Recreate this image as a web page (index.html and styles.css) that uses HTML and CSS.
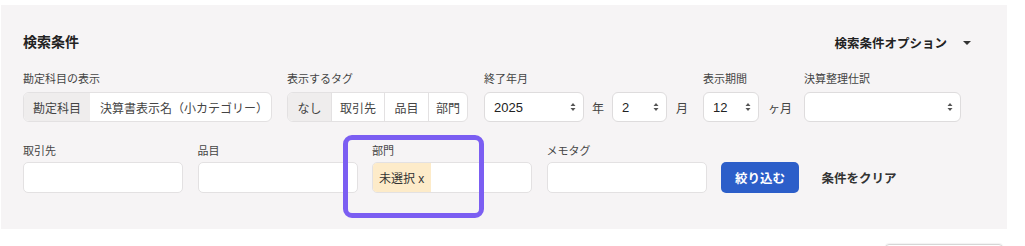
FILE: index.html
```html
<!DOCTYPE html>
<html lang="ja">
<head>
<meta charset="utf-8">
<link rel="stylesheet" href="styles.css">
</head>
<body>
<section class="panel">
  <div class="head">
    <h2 class="title">検索条件</h2>
    <div class="options">検索条件オプション<span class="caret"></span></div>
  </div>

  <div class="row row1">
    <div class="field">
      <div class="label">勘定科目の表示</div>
      <div class="seg seg-account">
        <span class="seg-item active">勘定科目</span>
        <span class="seg-item">決算書表示名（小カテゴリー）</span>
      </div>
    </div>
    <div class="field">
      <div class="label">表示するタグ</div>
      <div class="seg seg-tag">
        <span class="seg-item active">なし</span>
        <span class="seg-item">取引先</span>
        <span class="seg-item">品目</span>
        <span class="seg-item">部門</span>
      </div>
    </div>
    <div class="field field-date">
      <div class="label">終了年月</div>
      <div class="inline">
        <div class="select s-year"><span>2025</span><svg class="arr" viewBox="0 0 6 10"><path d="M3 1 L5.5 4 H0.5 Z M3 9 L5.5 6 H0.5 Z"/></svg></div>
        <span class="unit">年</span>
        <div class="select s-month"><span>2</span><svg class="arr" viewBox="0 0 6 10"><path d="M3 1 L5.5 4 H0.5 Z M3 9 L5.5 6 H0.5 Z"/></svg></div>
        <span class="unit">月</span>
      </div>
    </div>
    <div class="field">
      <div class="label">表示期間</div>
      <div class="inline">
        <div class="select s-period"><span>12</span><svg class="arr" viewBox="0 0 6 10"><path d="M3 1 L5.5 4 H0.5 Z M3 9 L5.5 6 H0.5 Z"/></svg></div>
        <span class="unit">ヶ月</span>
      </div>
    </div>
    <div class="field field-adjust">
      <div class="label">決算整理仕訳</div>
      <div class="select s-adjust"><span></span><svg class="arr" viewBox="0 0 6 10"><path d="M3 1 L5.5 4 H0.5 Z M3 9 L5.5 6 H0.5 Z"/></svg></div>
    </div>
  </div>

  <div class="row row2">
    <div class="field">
      <div class="label">取引先</div>
      <div class="input"></div>
    </div>
    <div class="field">
      <div class="label">品目</div>
      <div class="input"></div>
    </div>
    <div class="field highlight-host">
      <div class="label">部門</div>
      <div class="input"><span class="tag">未選択 x</span></div>
      <div class="highlight"></div>
    </div>
    <div class="field">
      <div class="label">メモタグ</div>
      <div class="input"></div>
    </div>
    <button class="btn-primary">絞り込む</button>
    <button class="btn-link">条件をクリア</button>
  </div>
</section>
<div class="footer">
  <div class="footer-box"></div>
</div>
</body>
</html>
```

FILE: styles.css
```css
* { box-sizing: border-box; }

body {
  margin: 0;
  font-family: "Liberation Sans", "Noto Sans CJK JP", sans-serif;
  color: #333;
  background: #fff;
  overflow: hidden;
}

.panel {
  margin: 5px 0 0 1px;
  width: 1006px;
  height: 224px;
  background: #f6f4f5;
  padding: 27px 36px 0 22px;
}

.head {
  display: flex;
  align-items: center;
  justify-content: space-between;
  height: 21px;
}

.title {
  margin: 0;
  font-size: 14px;
  font-weight: 700;
  line-height: 21px;
  color: #222;
}

.options {
  display: flex;
  align-items: center;
  font-size: 12.5px;
  font-weight: 700;
  color: #222;
  white-space: nowrap;
}

.caret {
  margin-left: 16px;
  width: 0;
  height: 0;
  border-left: 4px solid transparent;
  border-right: 4px solid transparent;
  border-top: 4px solid #333;
}

.row {
  display: flex;
  align-items: flex-end;
}

.row1 {
  margin-top: 19px;
  gap: 15px;
}

.row2 {
  margin-top: 22px;
  gap: 14.5px;
}

.field {
  display: flex;
  flex-direction: column;
  flex-shrink: 0;
}

.field-date { margin-left: 1px; }
.field-adjust { margin-left: -3px; }

.label {
  font-size: 11px;
  line-height: 14px;
  color: #444;
  margin-bottom: 6px;
  white-space: nowrap;
}

.row2 .label {
  margin-bottom: 4px;
}

.seg {
  display: flex;
  height: 30px;
  border: 1px solid #e3e1e2;
  border-radius: 6px;
  overflow: hidden;
  background: #fff;
}

.seg-account { width: 249px; }
.seg-tag { width: 181px; }

.seg-item {
  display: flex;
  align-items: center;
  justify-content: center;
  flex-shrink: 0;
  font-size: 12px;
  color: #444;
  white-space: nowrap;
  border-left: 1px solid #e3e1e2;
}

.seg-item:first-child {
  border-left: none;
}

.seg-item.active {
  background: #efeded;
}

.seg-account .seg-item:nth-child(1) { width: 66px; }
.seg-account .seg-item:nth-child(2) { flex: 1; justify-content: flex-start; padding-left: 10px; border-left: none; }
.seg-tag .seg-item:nth-child(1) { width: 43px; }
.seg-tag .seg-item:nth-child(2) { width: 53px; }
.seg-tag .seg-item:nth-child(3) { width: 44px; }
.seg-tag .seg-item:nth-child(4) { flex: 1; }

.inline {
  display: flex;
  align-items: center;
  height: 30px;
}

.unit {
  font-size: 12px;
  color: #444;
  margin: 0 8px;
  white-space: nowrap;
}

.inline .unit:last-child {
  margin-right: 0;
  margin-left: 9px;
}

.select {
  display: flex;
  align-items: center;
  justify-content: space-between;
  flex-shrink: 0;
  height: 30px;
  background: #fff;
  border: 1px solid #dedcdd;
  border-radius: 6px;
  padding: 0 7px 0 9px;
  font-size: 13px;
  color: #222;
}

.s-year { width: 100px; }
.s-month { width: 55px; }
.s-period { width: 56px; }
.s-adjust { width: 157px; }

.arr {
  width: 6px;
  height: 10px;
  fill: #555;
}

.input {
  width: 160px;
  height: 31px;
  background: #fff;
  border: 1px solid #e3e1e2;
  border-radius: 5px;
  display: flex;
  overflow: hidden;
}

.tag {
  display: flex;
  align-items: center;
  background: #fdebc9;
  padding: 0 7px 0 6px;
  font-size: 12px;
  color: #333;
  white-space: nowrap;
}

.highlight-host {
  position: relative;
}

.highlight {
  position: absolute;
  left: -29px;
  top: -9px;
  width: 141px;
  height: 83px;
  border: 5px solid #7b5ef2;
  border-radius: 9px;
  pointer-events: none;
}

.btn-primary {
  flex-shrink: 0;
  height: 31px;
  padding: 0 14px;
  border: none;
  border-radius: 5px;
  background: #2c5ec9;
  color: #fff;
  font-family: inherit;
  font-size: 12.5px;
  font-weight: 700;
}

.btn-link {
  flex-shrink: 0;
  height: 31px;
  margin-left: 8px;
  padding: 0;
  border: none;
  background: transparent;
  color: #333;
  font-family: inherit;
  font-size: 12.5px;
  font-weight: 700;
}

.footer {
  display: flex;
  justify-content: flex-end;
  padding-right: 22px;
  margin-top: 15px;
}

.footer-box {
  width: 118px;
  height: 30px;
  border: 1px solid #d6d6d6;
  border-radius: 4px;
  box-shadow: 0 -1px 1px rgba(0,0,0,0.05);
}
```
